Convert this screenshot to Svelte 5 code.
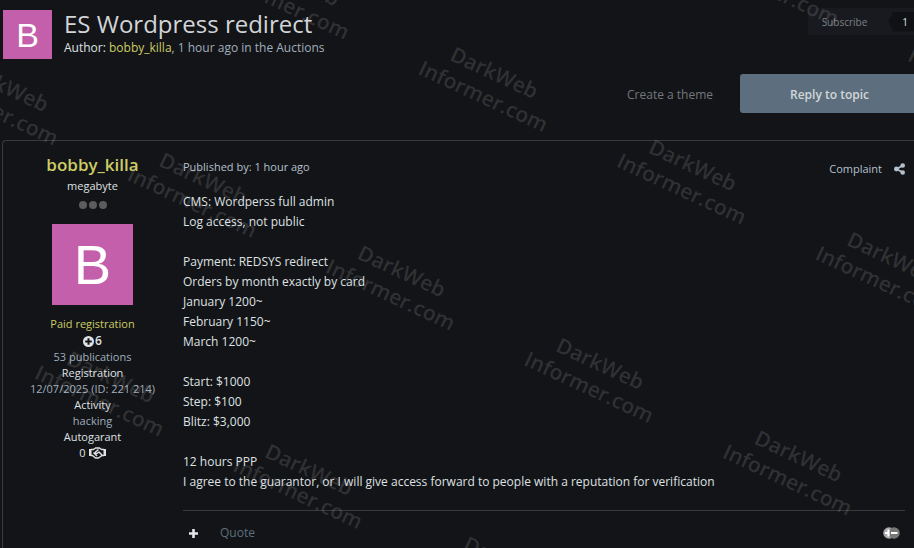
<script lang="ts">
  type Stat = { text: string; tone: string; icon?: string };

  const stats: Stat[] = [
    { text: '53 publications', tone: 'muted' },
    { text: 'Registration', tone: 'light' },
    { text: '12/07/2025 (ID: 221 214)', tone: 'muted' },
    { text: 'Activity', tone: 'light' },
    { text: 'hacking', tone: 'muted' },
    { text: 'Autogarant', tone: 'light' },
    { text: '0', tone: 'light', icon: 'handshake' },
  ];

  const paragraphs: string[][] = [
    ['CMS: Wordperss full admin', 'Log access, not public'],
    [
      'Payment: REDSYS redirect',
      'Orders by month exactly by card',
      'January 1200~',
      'February 1150~',
      'March 1200~',
    ],
    ['Start: $1000', 'Step: $100', 'Blitz: $3,000'],
    [
      '12 hours PPP',
      'I agree to the guarantor, or I will give access forward to people with a reputation for verification',
    ],
  ];

  // Watermark tiles sit on a square grid that is itself turned by 25 degrees,
  // so each row of the grid is listed with its first and last visible column.
  const PITCH = 219;
  const rows = [
    { row: -1, from: 1, to: 2 },
    { row: 0, from: -1, to: 2 },
    { row: 1, from: -2, to: 2 },
    { row: 2, from: -1, to: 1 },
  ];
  const tiles = rows.flatMap(({ row, from, to }) =>
    Array.from({ length: to - from + 1 }, (_, i) => ({ x: (from + i) * PITCH, y: row * PITCH })),
  );
</script>

<div class="page">
  <header class="topic">
    <div class="avatar avatar--small" aria-hidden="true">B</div>
    <div class="topic__text">
      <h1>ES Wordpress redirect</h1>
      <p class="byline">
        Author: <a class="user" href="#user">bobby_killa</a><span class="muted">, 1 hour ago in the <a href="#auctions">Auctions</a></span>
      </p>
    </div>
    <button type="button" class="subscribe">
      <span>Subscribe</span>
      <span class="subscribe__count">1</span>
    </button>
  </header>

  <nav class="actions">
    <a class="actions__create" href="#create">Create a theme</a>
    <button type="button" class="reply">Reply to topic</button>
  </nav>

  <article class="post">
    <aside class="author">
      <a class="author__name user" href="#user">bobby_killa</a>
      <span class="light">megabyte</span>
      <div class="pips"><i></i><i></i><i></i></div>
      <div class="avatar avatar--large" aria-hidden="true">B</div>
      <span class="user">Paid registration</span>
      <ul class="stats">
        <li class="rep">
          <svg width="11" height="11" viewBox="0 0 10 10" aria-hidden="true">
            <circle cx="5" cy="5" r="5" fill="#dfe1e3" />
            <path d="M5 2v6M2 5h6" stroke="#131417" stroke-width="1.800" />
          </svg>6
        </li>
        {#each stats as s}
          <li class={s.tone}>
            {s.text}
            {#if s.icon}
              <svg width="17" height="12" viewBox="0 0 17 12" aria-hidden="true">
                <path d="M0 2h2.500v7H0zM14.500 2H17v7h-2.500z" fill="#dfe1e3" />
                <path
                  d="M2 2.500h2.500L6.500 1h4l2 1.500H15M2 8.500h1.500l3 2.500h3l3.500-2.500h2M9.500 2.500 6.500 5c-.5 1.500 1 2 2 1l1.500-1 3 3M4.500 5.500 8 9"
                  fill="none"
                  stroke="#dfe1e3"
                  stroke-width="1.500"
                  stroke-linejoin="round"
                />
              </svg>
            {/if}
          </li>
        {/each}
      </ul>
    </aside>

    <section class="content">
      <div class="content__head">
        <span>Published by: 1 hour ago</span>
        <div class="content__tools">
          <a href="#complaint">Complaint</a>
          <button type="button" class="icon-btn" aria-label="Share">
            <svg width="11" height="12" viewBox="0 0 11 12" aria-hidden="true">
              <path d="M9 2.500 2.500 6 9 9.500" fill="none" stroke="#b4c0cd" stroke-width="1.800" />
              <circle cx="8.700" cy="2.500" r="2.300" fill="#b4c0cd" />
              <circle cx="2.400" cy="6" r="2.400" fill="#b4c0cd" />
              <circle cx="8.700" cy="9.500" r="2.300" fill="#b4c0cd" />
            </svg>
          </button>
        </div>
      </div>

      <div class="content__body">
        {#each paragraphs as lines}
          <p>
            {#each lines as line}
              <span>{line}</span>
            {/each}
          </p>
        {/each}
      </div>

      <footer class="content__foot">
        <button type="button" class="icon-btn" aria-label="Multiquote">
          <svg width="9" height="9" viewBox="0 0 9 9" aria-hidden="true">
            <path d="M4.500 0v9M0 4.500h9" stroke="#e4e5e6" stroke-width="2.600" />
          </svg>
        </button>
        <a class="quote" href="#quote">Quote</a>
        <button type="button" class="icon-btn icon-btn--end" aria-label="Rate post">
          <svg width="17" height="12" viewBox="0 0 17 12" aria-hidden="true">
            <circle cx="6" cy="6" r="5.800" fill="#a9a9a9" />
            <circle cx="11" cy="6" r="5.800" fill="#777777" />
            <path d="M5.500 2.500v7M2 6h4M8 6h6.500" stroke="#ffffff" stroke-width="2.200" />
          </svg>
        </button>
      </footer>
    </section>
  </article>

  <svg class="watermark" aria-hidden="true">
    <g transform="translate(489 84) rotate(25)">
      {#each tiles as t}
        <text x={t.x} y={t.y - 5}>DarkWeb</text>
        <text x={t.x} y={t.y + 21}>Informer.com</text>
      {/each}
    </g>
  </svg>
</div>

<style>
  :global(body) {
    background: #131417;
  }
  .page {
    position: relative;
    min-height: 100vh;
    box-sizing: border-box;
    padding: 8px 0 0 2px;
    overflow: hidden;
    color: #dfe1e3;
    font: 12px/16px 'Segoe UI', 'Open Sans', 'Noto Sans', sans-serif;
  }
  a {
    color: inherit;
    text-decoration: none;
  }
  button {
    padding: 0;
    border: 0;
    background: none;
    color: inherit;
    font: inherit;
    cursor: pointer;
  }
  h1,
  p,
  ul {
    margin: 0;
    padding: 0;
    font-weight: 400;
    list-style: none;
  }
  svg {
    display: block;
  }
  .muted { color: #a0aebc; }
  .light { color: #dfe1e3; }
  a.user,
  .user { color: #cccc66; }

  .avatar {
    display: flex;
    align-items: center;
    justify-content: center;
    background: #c45fab;
    color: #ffffff;
    font-family: 'Liberation Sans', Arial, sans-serif;
  }
  .avatar--small {
    width: 49px;
    height: 49px;
    font-size: 34px;
  }
  .avatar--large {
    width: 81px;
    height: 81px;
    margin: 15px 0 11px;
    font-size: 56px;
  }

  .topic {
    display: flex;
    align-items: flex-start;
    padding-left: 1px;
  }
  .topic .avatar {
    margin-top: 2px;
  }
  .topic__text {
    flex: 1;
    padding-left: 12px;
  }
  h1 {
    color: #d2d5d8;
    font-size: 24px;
    line-height: 32px;
  }
  .subscribe {
    display: flex;
    align-items: center;
    gap: 21px;
    height: 27px;
    padding-left: 14px;
    border-radius: 3px 0 0 3px;
    background: #191a1f;
    color: #7c8084;
    font-size: 10px;
  }
  .subscribe__count {
    padding: 2px 6px 2px 14px;
    background: #101114;
    clip-path: polygon(5px 0, 100% 0, 100% 100%, 5px 100%, 0 50%);
    color: #dfe1e3;
  }

  .actions {
    display: flex;
    align-items: center;
    justify-content: flex-end;
    gap: 27px;
    margin: 15px 0 27px;
  }
  .actions__create {
    padding-top: 2px;
    color: #73777b;
  }
  .reply {
    height: 39px;
    padding: 3px 45px 0 50px;
    border-radius: 3px 0 0 3px;
    background: #5d6f7e;
    color: #d2d6d9;
    font-weight: 600;
  }

  .post {
    display: flex;
    border: 1px solid #3a3a3b;
    border-width: 1px 0 0 1px;
    border-radius: 4px 0 0 0;
  }
  .author {
    display: flex;
    flex: 0 0 179px;
    flex-direction: column;
    align-items: center;
    padding-top: 11px;
    font-size: 11px;
  }
  .author__name {
    font-size: 17px;
    font-weight: 600;
    line-height: 26px;
  }
  .pips {
    display: flex;
    gap: 2px;
    margin-top: 7px;
  }
  .pips i {
    width: 8px;
    height: 8px;
    border-radius: 50%;
    background: #5c5c5c;
  }
  .stats {
    padding-top: 1px;
  }
  .stats li {
    display: flex;
    align-items: center;
    justify-content: center;
    gap: 3px;
  }
  .stats .rep {
    gap: 1px;
    font-size: 12px;
    font-weight: 600;
  }

  .content {
    flex: 1;
    min-width: 0;
    padding: 18px 9px 0 1px;
  }
  .content__head {
    display: flex;
    justify-content: space-between;
    color: #b4c0cd;
    font-size: 11px;
  }
  .content__tools {
    display: flex;
    align-items: center;
    gap: 12px;
    padding-top: 2px;
  }
  .content__body {
    display: flex;
    flex-direction: column;
    gap: 20px;
    padding: 15px 0 18px;
    line-height: 20px;
  }
  .content__body span {
    display: block;
  }
  .content__foot {
    display: flex;
    align-items: center;
    gap: 22px;
    padding: 14px 5px 7px 6px;
    border-top: 1px solid #38393b;
  }
  .quote {
    color: #5d6f7e;
  }
  .icon-btn--end {
    margin-left: auto;
  }

  .watermark {
    position: absolute;
    inset: 0;
    width: 100%;
    height: 100%;
    pointer-events: none;
  }
  .watermark text {
    fill: #ffffff;
    fill-opacity: 0.13;
    font-size: 21px;
    font-weight: 600;
    text-anchor: middle;
  }
</style>
